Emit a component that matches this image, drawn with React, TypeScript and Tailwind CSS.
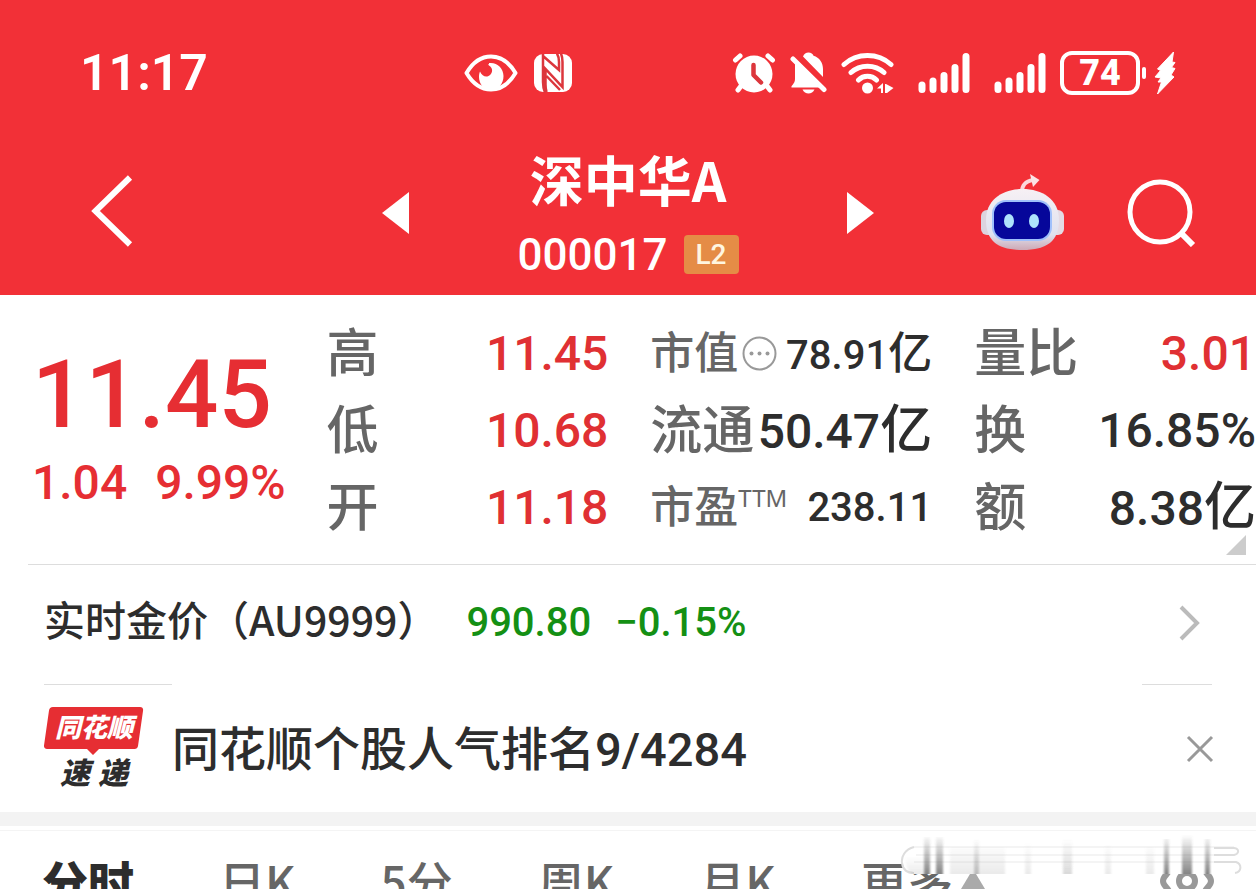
import type { ReactNode } from "react";

const NUM = "font-['Roboto','Noto_Sans_CJK_SC',sans-serif]";

type Quote = {
  label: string;
  value: string;
  unit?: string;
  extra?: "more" | "ttm";
  small?: boolean;
  up?: boolean;
};

const QUOTES: Quote[] = [
  { label: "高", value: "11.45", up: true },
  { label: "市值", value: "78.91", unit: "亿", extra: "more", small: true },
  { label: "量比", value: "3.01", up: true },
  { label: "低", value: "10.68", up: true },
  { label: "流通", value: "50.47", unit: "亿" },
  { label: "换", value: "16.85%" },
  { label: "开", value: "11.18", up: true },
  { label: "市盈", value: "238.11", extra: "ttm", small: true },
  { label: "额", value: "8.38", unit: "亿" },
];

const TABS = ["分时", "日K", "5分", "周K", "月K"];

function EyeIcon() {
  return (
    <svg className="h-10 w-[54px]" viewBox="0 0 54 40" fill="none">
      <path d="M2.5 20C9 9 17 3.500 27 3.500S45 9 51.500 20C45 31 37 36.500 27 36.500S9 31 2.500 20z" stroke="#fff" strokeWidth="4" strokeLinejoin="round" />
      <path d="M25 10c8-1 14.500 5 14.500 13 0 8-5.500 14-12.500 14s-12-6-12-13c0-2 .3-4 1-5.500 2 4.500 5.500 6 8.500 4.500 5-2.500 4.500-8.500.5-10.500-1-.6-1-1.400 0-1.500z" fill="#fff" />
    </svg>
  );
}

function NfcIcon() {
  return (
    <svg className="h-10 w-[38px]" viewBox="0 0 38 40" fill="none">
      <rect y="1" width="38" height="38" rx="9" fill="#fff" />
      <path d="M9 1v28c0 4 .5 7 2 10.500M9 3 25 17V9c0-3-.5-6-2-8.500M12.500 39c-.5-2-1-4.500-1-7.500V16L28.500 34V9c0-3-.5-6-1.500-8.500M12.500 23 26 37" stroke="#dc363c" strokeWidth="2.500" />
    </svg>
  );
}

function AlarmIcon() {
  return (
    <svg className="h-[42px] w-11" viewBox="0 0 44 42" fill="none" strokeLinecap="round" strokeLinejoin="round">
      <circle cx="22" cy="22" r="18.500" fill="#fff" />
      <path d="M3.500 8 8 4M40.500 8 36 4M9 34l-3 4M35 34l3 4" stroke="#fff" strokeWidth="5" />
      <path d="M21.500 13v10l7.500 7.500" stroke="#dc363c" strokeWidth="4.500" />
    </svg>
  );
}

function BellOffIcon() {
  return (
    <svg className="h-[42px] w-[37px]" viewBox="0 0 37 42" fill="none">
      <path d="M13 4.500C14 2 16 .5 18.500 .5s4.500 1.300 5 3.300c6 1.700 9.500 7 9.500 13.200v8z" fill="#fff" />
      <path d="M5 11 30 35.500H1.500c-.8-2 3.500-3.500 3.500-8.500z" fill="#fff" />
      <path d="M12.500 37.500h12c-1.200 2.700-3.500 4-6 4s-4.800-1.300-6-4z" fill="#fff" />
      <path d="M3 7 34 37.500" stroke="#fff" strokeWidth="5" strokeLinecap="round" />
    </svg>
  );
}

function WifiIcon() {
  return (
    <svg className="h-[42px] w-[53px]" viewBox="0 0 53 42" fill="none">
      <path d="M3 12.500C16 .5 37 .5 50 12.500M10 20.500c9-8.500 24-8.500 33 0M17.500 28c5-5 13-5 18 0" stroke="#fff" strokeWidth="5" strokeLinecap="round" />
      <circle cx="26.500" cy="36" r="5.500" fill="#fff" />
      <path d="M36 36.500 42 31v10h-2v-4.500zM45 32l7.500 4L46 41h-2v-9z" fill="#fff" />
    </svg>
  );
}

function SignalIcon() {
  return (
    <svg className="h-[42px] w-[52px]" viewBox="0 0 52 42" fill="none" stroke="#fff" strokeWidth="7" strokeLinecap="round">
      <path d="M4 33v4.500M15 29v8.500M26 23.500v14M37 15.500v22M48 4.500v33" />
    </svg>
  );
}

function BoltIcon() {
  return (
    <svg className="h-11 w-[22px]" viewBox="0 0 22 44" fill="#fff" stroke="#fff" strokeWidth="1" strokeLinejoin="round">
      <path d="M19.500 1 3.500 18l3 1.500L1 26l6 1-3 4h3.500L3.500 43 20 26l-3-2 4-6.500-3.500-1 3.500-5-3-.5z" />
    </svg>
  );
}

function RobotIcon() {
  return (
    <svg className="h-[78px] w-[85px]" viewBox="0 0 85 78" fill="none">
      <defs>
        <linearGradient id="shell" x1="0" y1="0" x2="0" y2="1">
          <stop offset="0" stopColor="#f6f0f4" />
          <stop offset=".75" stopColor="#dfe2ef" />
          <stop offset="1" stopColor="#cda9b5" />
        </linearGradient>
      </defs>
      <path d="M42 18c0-7 3-10.500 11-12" stroke="#fbd9dc" strokeWidth="4" />
      <path d="M50 0 59.500 6 53 13z" fill="#fbe3e5" />
      <rect x="1" y="36" width="16" height="25" rx="6" fill="#dcd3de" />
      <rect x="68" y="36" width="16" height="25" rx="6" fill="#e4dbe4" />
      <path d="M42.500 15C62 15 79 25 79 46S67 76 42.500 76 6 67 6 46s17-31 36.500-31z" fill="url(#shell)" />
      <rect x="12" y="26" width="60" height="41" rx="14" fill="#9fc0fb" />
      <rect x="14" y="28" width="56" height="37" rx="12" fill="#06079a" />
      <ellipse cx="29" cy="47" rx="5" ry="7" fill="#aee3fc" />
      <ellipse cx="54" cy="47" rx="5" ry="7" fill="#aee3fc" />
    </svg>
  );
}

function ThsLogo() {
  return (
    <div className="relative flex h-20 w-[100px] shrink-0 flex-col items-center font-black italic">
      <svg className="absolute inset-0 h-20 w-[100px]" viewBox="0 0 100 80" fill="#e62e33">
        <path d="M9 0h87c2.500 0 3.500 1.500 3 4l-5 35c-.4 2-1.500 3-3.500 3H55l-6 6-6-6H3c-2 0-3.300-1.500-3-3.500L5 3.500C5.400 1.300 6.500 0 9 0z" />
      </svg>
      <span className="relative mb-1 text-[26px] leading-[38px] text-white">同花顺</span>
      <span className="relative flex gap-2 pt-1 text-[30px] leading-[36px] text-[#2d2d2d]">
        <span>速</span>
        <span>递</span>
      </span>
    </div>
  );
}

// smudged strip that floats above the right end of the tab row
function Haze() {
  return (
    <svg className="absolute top-1 right-2 h-12 w-[348px]" viewBox="0 0 348 48" fill="none">
      <defs>
        <linearGradient id="fade" x1="0" y1="0" x2="0" y2="1">
          <stop offset="0" stopColor="#666" stopOpacity="0" />
          <stop offset="1" stopColor="#666" stopOpacity=".8" />
        </linearGradient>
        <linearGradient id="soft" x1="0" y1="0" x2="0" y2="1">
          <stop offset="0" stopColor="#999" stopOpacity="0" />
          <stop offset="1" stopColor="#999" stopOpacity=".2" />
        </linearGradient>
        <filter id="smear">
          <feGaussianBlur stdDeviation="1.200 .4" />
        </filter>
      </defs>
      <path d="M12 9h325a9 9 0 0 1 0 30H12C-1 38-1 12 12 9z" fill="#fff" />
      <path d="M14 12h320M16 20h318M14 27h322" stroke="#f4f4f4" strokeWidth="2" />
      <path d="M14 12C5 14 1 22 2 28c1 7 6 10 12 10M314 13h20c6 1 5 6 0 7h-20M314 27h22c6 2 6 10-1 11" stroke="#ddd" strokeWidth="2" />
      <g filter="url(#smear)">
        <path d="M24 2h6v37h-6zM36 2h7v37h-7zM264 4h5v35h-5zM282 0h10v39h-10zM305 4h5v35h-5z" fill="url(#fade)" />
        <path d="M74 4h5v35h-5z" fill="url(#fade)" opacity=".5" />
        <path d="M163 4h9v35h-9z" fill="url(#fade)" opacity=".3" />
        <path d="M50 12h55v27H50zM125 8h6v31h-6zM205 10h6v29h-6zM246 12h8v27h-8z" fill="url(#soft)" />
        <path d="M6 22h18v17H14c-6-1-9-9-8-17z" fill="url(#soft)" />
      </g>
    </svg>
  );
}

function QuoteItem({ label, value, unit, extra, small, up }: Quote) {
  return (
    <div className="flex h-[77px] items-center justify-between whitespace-nowrap">
      <dt className={`flex items-center font-medium text-[#666] ${small ? "text-[44px]" : "text-[52px]"}`}>
        <span className="pb-2">{label}</span>
        {extra === "more" && (
          <svg className="ml-1 h-[35px] w-[35px]" viewBox="0 0 35 35" fill="#999">
            <circle cx="17.500" cy="17.500" r="16" fill="none" stroke="#999" strokeWidth="2" />
            <circle cx="9.500" cy="17.500" r="2" />
            <circle cx="17.500" cy="17.500" r="2" />
            <circle cx="25.500" cy="17.500" r="2" />
          </svg>
        )}
        {extra === "ttm" && (
          <sup className="top-0 mb-5 font-['Noto_Sans',sans-serif] text-[24px] leading-6 font-normal">TTM</sup>
        )}
      </dt>
      <dd
        className={`flex items-baseline font-medium ${NUM} ${small ? "text-[40px]" : "text-[48px]"} ${up ? "text-[#e03033]" : "text-[#2d2d2d]"}`}
      >
        {value}
        {unit && <span className={small ? "text-[44px]" : "text-[52px]"}>{unit}</span>}
      </dd>
    </div>
  );
}

function IconButton({ label, children }: { label: string; children: ReactNode }) {
  return (
    <button type="button" aria-label={label} className="shrink-0">
      {children}
    </button>
  );
}

export default function App() {
  return (
    <div className="h-screen overflow-hidden bg-white font-['Noto_Sans_CJK_SC',sans-serif] text-[#2d2d2d]">
      <header className="bg-[#f23037] text-white">
        <div className="flex h-[146px] items-center px-20">
          <time className={`w-[35%] text-[50px] font-semibold ${NUM}`}>11:17</time>
          <div className="flex items-center gap-4">
            <EyeIcon />
            <NfcIcon />
          </div>
          <div className="ml-auto flex items-center">
            <div className="flex items-center gap-[14px]">
              <AlarmIcon />
              <BellOffIcon />
              <WifiIcon />
            </div>
            <div className="mr-[14px] ml-6 flex items-center gap-6">
              <SignalIcon />
              <SignalIcon />
            </div>
            <span
              className={`flex h-11 w-20 items-center justify-center rounded-xl border-4 border-white text-[36px] leading-9 font-extrabold ${NUM}`}
            >
              74
            </span>
            <span className="mr-2 ml-[2px] h-3 w-1 rounded-full bg-white" />
            <BoltIcon />
          </div>
        </div>

        <div className="grid h-[149px] grid-cols-[1fr_auto_1fr] items-center pb-1">
          <div className="flex pb-4 pl-[91px]">
            <IconButton label="返回">
              <svg className="h-[72px] w-[42px]" viewBox="0 0 42 72" fill="none" stroke="#fff" strokeWidth="6">
                <path d="M39 2.500 4.500 36 39 69.500" />
              </svg>
            </IconButton>
          </div>
          <div className="flex w-[492px] items-center justify-between">
            <div className="flex pb-3">
              <IconButton label="上一只">
                <svg className="h-[42px] w-[27px]" viewBox="0 0 27 42" fill="#fff">
                  <path d="M27 0v42L0 21z" />
                </svg>
              </IconButton>
            </div>
            <div className="text-center">
              <h1 className="pb-2 text-[54px] leading-[64px] font-bold">深中华A</h1>
              <div className="flex h-[72px] items-center justify-center gap-4">
                <span className={`text-[44px] font-medium ${NUM}`}>000017</span>
                <span
                  className={`rounded bg-[#e58c46] px-3 text-[28px] leading-[39px] font-medium text-[#fff6e0] ${NUM}`}
                >
                  L2
                </span>
              </div>
            </div>
            <div className="flex pb-3">
              <IconButton label="下一只">
                <svg className="h-[42px] w-[27px]" viewBox="0 0 27 42" fill="#fff">
                  <path d="M0 0v42l27-21z" />
                </svg>
              </IconButton>
            </div>
          </div>
          <div className="flex items-center justify-end gap-[62px] pr-[60px] pb-3">
            <IconButton label="智能助手">
              <RobotIcon />
            </IconButton>
            <IconButton label="搜索">
              <svg className="h-[68px] w-[69px]" viewBox="0 0 69 68" fill="none" stroke="#fff" strokeWidth="5">
                <circle cx="33" cy="33" r="30" />
                <path d="m54 54 12 12" strokeWidth="6" />
              </svg>
            </IconButton>
          </div>
        </div>
      </header>

      <section className="relative flex pt-5 pb-[18px]">
        <div className={`w-[26%] shrink-0 pt-6 pl-8 font-medium text-[#e62e33] ${NUM}`}>
          <div className="text-[94px] leading-[112px]">11.45</div>
          <div className="flex gap-7 text-[48px] leading-[64px]">
            <span>1.04</span>
            <span>9.99%</span>
          </div>
        </div>
        <dl className="grid flex-1 grid-cols-3 gap-x-[42px]">
          {QUOTES.map((q) => (
            <QuoteItem key={q.label} {...q} />
          ))}
        </dl>
        <svg className="absolute right-[10px] bottom-[9px] h-5 w-5" viewBox="0 0 20 20" fill="#ccc">
          <path d="M20 0v20H0z" />
        </svg>
      </section>

      <div className="ml-7 border-t border-[#ddd]" />
      <a href="#gold" className="flex h-[119px] items-center pr-14 pb-1 pl-11 whitespace-nowrap">
        <span className="pb-2 text-[41px] font-medium">实时金价（AU9999）</span>
        <span className={`ml-7 flex gap-6 text-[40px] font-medium text-[#149014] ${NUM}`}>
          <span>990.80</span>
          <span>−0.15%</span>
        </span>
        <svg className="ml-auto h-9 w-[22px]" viewBox="0 0 22 36" fill="none" stroke="#bbb" strokeWidth="4">
          <path d="m3 2 16 16L3 34" />
        </svg>
      </a>

      <div className="mr-11 ml-11 flex justify-between">
        <span className="w-32 border-t border-[#ddd]" />
        <span className="w-[70px] border-t border-[#ddd]" />
      </div>
      <div className="flex h-[127px] items-center pr-[42px] pb-1 pl-11">
        <ThsLogo />
        <a href="#rank" className="pt-1 ml-7 text-[47px] font-medium whitespace-nowrap">
          同花顺个股人气排名<span className={NUM}>9/4284</span>
        </a>
        <button type="button" aria-label="关闭" className="ml-auto pt-1">
          <svg className="h-7 w-7" viewBox="0 0 28 28" fill="none" stroke="#999" strokeWidth="3">
            <path d="m2 2 24 24M26 2 2 26" />
          </svg>
        </button>
      </div>

      <div className="h-[14px] bg-[#f3f3f3]" />
      <nav className="relative mt-1 flex h-[100px] items-center gap-[85px] border-t border-[#f4f4f4] px-[42px] text-[46px] font-medium whitespace-nowrap text-[#666]">
        {TABS.map((tab, i) => (
          <button key={tab} type="button" className={i === 0 ? "font-black text-[#2d2d2d]" : ""}>
            {tab}
          </button>
        ))}
        <button type="button" className="flex items-center gap-2">
          更多
          <svg className="h-6 w-6" viewBox="0 0 24 24" fill="#aaa">
            <path d="M12 0 24 20H0z" />
          </svg>
        </button>
        <button type="button" aria-label="设置" className="ml-auto">
          <svg className="h-[54px] w-[54px]" viewBox="0 0 54 54" fill="none" stroke="#999" strokeWidth="6">
            <path d="M9 14c2 5-6 7-6 13s8 8 6 13M45 14c-2 5 6 7 6 13s-8 8-6 13" />
            <circle cx="27" cy="27" r="8" />
          </svg>
        </button>
        <Haze />
      </nav>
    </div>
  );
}
